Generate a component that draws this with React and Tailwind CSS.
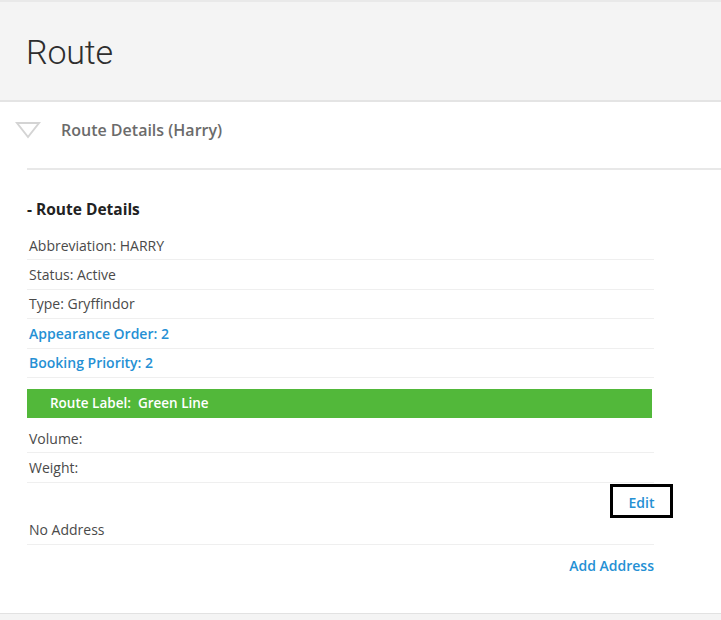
import React from "react";

const Row = ({ children, blue }) => (
  <div
    className={`h-[29.4px] flex items-center border-b border-[#efefef] pl-[2px] text-[14px] ${
      blue ? "text-[#2590d4] font-semibold" : "text-[#4a4a4a]"
    }`}
  >
    {children}
  </div>
);

export default function App() {
  return (
    <div className="w-[721px] h-[620px] overflow-hidden bg-white flex flex-col font-['Open_Sans',sans-serif]">
      <div className="h-[102px] shrink-0 bg-[#f4f4f4] border-t-2 border-[#e9e9e9] border-b-2 border-b-[#e4e4e4] flex items-center pl-[26px] pt-[2px]">
        <h1 className="font-['Roboto',sans-serif] font-light text-[34px] text-[#2e2e2e] tracking-[-0.2px]">
          Route
        </h1>
      </div>

      <div className="h-[66px] shrink-0 flex items-center pb-[10px]">
        <svg width="26" height="18" viewBox="0 0 26 18" className="ml-[15px]">
          <path d="M2 2 L24 2 L13 16 Z" fill="none" stroke="#d4d4d4" strokeWidth="2" strokeLinejoin="miter" />
        </svg>
        <span className="ml-[20px] text-[16px] font-semibold text-[#6b6b6b]">Route Details (Harry)</span>
      </div>
      <div className="ml-[27px] h-[2px] bg-[#e8e8e8] shrink-0" />

      <div className="flex-1 pl-[27px] pt-[27px]">
        <div className="w-[627px]">
          <h2 className="h-[24px] leading-[24px] text-[15.5px] font-bold text-[#222] mb-[10px]">- Route Details</h2>
          <Row>Abbreviation: HARRY</Row>
          <Row>Status: Active</Row>
          <Row>Type: Gryffindor</Row>
          <Row blue>Appearance Order: 2</Row>
          <Row blue>Booking Priority: 2</Row>

          <div className="mt-[11px] h-[29px] w-[625px] bg-[#52b83a] flex items-center pl-[23px] text-[13.5px] font-semibold text-white whitespace-pre">
            {"Route Label:  Green Line"}
          </div>

          <div className="mt-[6px]" />
          <Row>Volume:</Row>
          <Row>Weight:</Row>

          <div className="h-[33px] flex justify-end items-start">
            <a className="mt-[1px] mr-[-19px] w-[63px] h-[34px] pt-[4px] border-[3px] border-black flex items-center justify-center text-[14px] font-semibold text-[#2590d4]">
              Edit
            </a>
          </div>
          <Row>No Address</Row>
          <div className="h-[41px] flex items-center justify-end text-[14px] font-semibold text-[#2590d4]">
            Add Address
          </div>
        </div>
      </div>

      <div className="h-[7px] shrink-0 bg-[#f4f4f4] border-t border-[#e2e2e2]" />
    </div>
  );
}
